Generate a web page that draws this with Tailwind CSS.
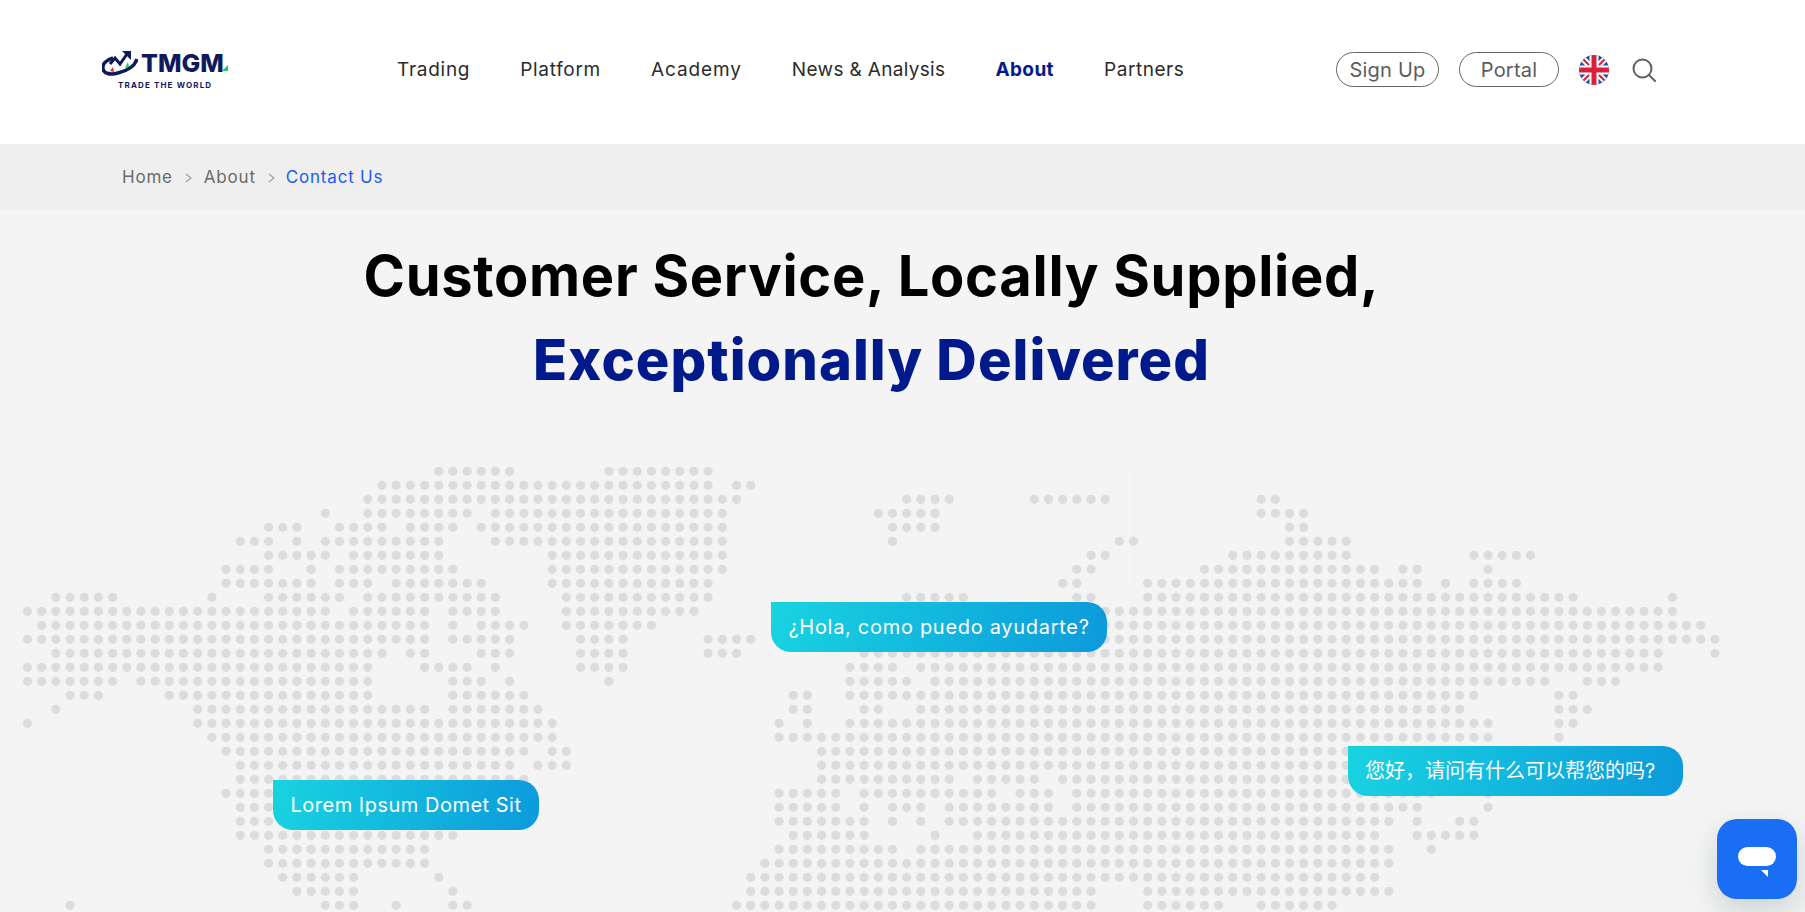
<!DOCTYPE html>
<html>
  <head>
    <meta charset="UTF-8" />
    <meta name="viewport" content="width=device-width, initial-scale=1.0" />
    <script src="https://cdn.jsdelivr.net/npm/@tailwindcss/browser@4"></script>
  </head>

  <body class="font-['Inter','Noto_Sans_CJK_SC',sans-serif] bg-[#f4f4f4]">
    <div class="relative h-[912px] overflow-hidden">
      <!-- header -->
      <header class="h-[144px] bg-white flex items-center">
        <div class="ml-[101px] w-[127px] h-[44px] relative shrink-0">
          <svg class="absolute left-px top-0" width="36" height="26" viewBox="0 0 36 26" fill="none">
            <path d="M11 8C4 10 0 14 1 19c1 5 8 6 15 4 9-2 17-7 19-14" stroke="#0f1a5c" stroke-width="3.6" fill="none"/>
            <path d="M8 14l5-6 5 6 7-10" stroke="#0f1a5c" stroke-width="3" fill="none"/>
            <path d="M20 1h9v9z" fill="#0f1a5c"/>
            <path d="M8 21l3-4 1 5z" fill="#e5343c"/>
            <path d="M23 18l3-6 1 5z" fill="#22c55e"/>
          </svg>
          <span class="absolute left-[40px] top-[-2px] text-[25px] leading-[30px] font-extrabold text-[#0f1a5c] font-['Inter']">TMGM</span>
          <svg class="absolute left-[121px] top-[15px]" width="6" height="6" viewBox="0 0 6 6"><path d="M6 0v6H0z" fill="#22c55e"/></svg>
          <span class="absolute left-[17px] top-[29px] text-[8px] leading-[12px] font-bold tracking-[1.15px] text-[#0f1a5c] whitespace-nowrap">TRADE THE WORLD</span>
        </div>

        <nav class="ml-[169px] mb-[3px] flex items-center gap-[50px] text-[19px] text-[#2b2b2b]">
          <a class="tracking-[0.73px]">Trading</a>
          <a class="tracking-[0.7px]">Platform</a>
          <a class="tracking-[0.9px]">Academy</a>
          <a class="tracking-[0.33px]">News &amp; Analysis</a>
          <a class="font-bold tracking-[0.4px] text-[#001a8c]">About</a>
          <a class="tracking-[0.55px]">Partners</a>
        </nav>

        <div class="ml-auto mr-[149px] mb-[5px] flex items-center">
          <a class="w-[103px] h-[35px] rounded-full border border-[#666] flex items-center justify-center text-[20px] tracking-[0.2px] text-[#5c5c5c]">Sign Up</a>
          <a class="ml-[20px] w-[100px] h-[35px] rounded-full border border-[#666] flex items-center justify-center text-[20px] tracking-[0.2px] text-[#5c5c5c]">Portal</a>
          <svg class="ml-[20px]" width="30" height="30" viewBox="0 0 30 30">
            <defs><clipPath id="flagClip"><circle cx="15" cy="15" r="15"/></clipPath></defs>
            <g clip-path="url(#flagClip)">
              <rect width="30" height="30" fill="#1f4fa8"/>
              <path d="M0 0L30 30M30 0L0 30" stroke="#fff" stroke-width="6"/>
              <path d="M0 0L30 30M30 0L0 30" stroke="#d8203a" stroke-width="2"/>
              <path d="M15 0V30M0 15H30" stroke="#fff" stroke-width="9"/>
              <path d="M15 0V30M0 15H30" stroke="#d8203a" stroke-width="5"/>
            </g>
          </svg>
          <svg class="ml-[23px]" width="24" height="24" viewBox="0 0 24 24" fill="none" stroke="#5f5f5f" stroke-width="2">
            <circle cx="10.5" cy="10.5" r="9"/>
            <path d="M17 17l6 6" stroke-linecap="round"/>
          </svg>
        </div>
      </header>

      <!-- breadcrumb -->
      <div class="h-[66px] bg-[#efefef] pl-[122px] pt-[2px] flex items-center text-[17px] text-[#6b6b6b]">
        <a class="tracking-[0.8px]">Home</a>
        <svg class="mx-[12px]" width="7" height="10" viewBox="0 0 7 10" fill="none" stroke="#a0a0a0" stroke-width="1.2"><path d="M1 1l5 4-5 4"/></svg>
        <a class="tracking-[0.8px]">About</a>
        <svg class="ml-[12px] mr-[11px]" width="7" height="10" viewBox="0 0 7 10" fill="none" stroke="#a0a0a0" stroke-width="1.2"><path d="M1 1l5 4-5 4"/></svg>
        <a class="tracking-[0.8px] text-[#1d5cf0]">Contact Us</a>
      </div>

      <!-- headline -->
      <div class="relative z-10 w-[1743px] pt-[24px] text-center text-[56px] leading-[84px]">
        <h1 class="font-bold text-black tracking-[0.7px]">Customer Service, Locally Supplied,</h1>
        <h2 class="font-extrabold text-[#001a8c] tracking-[1.05px]">Exceptionally Delivered</h2>
      </div>

      <!-- faint frame behind the map, then the dotted world map -->
      <div class="absolute left-[600px] top-[469px] w-[535px] h-[119px] border border-[#f0f0f0]"></div>
      <svg id="worldMap" class="absolute left-0 top-0" width="1805" height="912"></svg>

      <!-- greeting bubbles -->
      <div class="absolute left-[273px] top-[780px] w-[266px] h-[50px] rounded-[20px] rounded-tl-none bg-linear-[100deg] from-[#19d3e0] to-[#0c9adb] flex items-center justify-center text-white text-[20px] tracking-[0.5px]">Lorem Ipsum Domet Sit</div>
      <div class="absolute left-[771px] top-[602px] w-[336px] h-[50px] rounded-[20px] rounded-tl-none bg-linear-[100deg] from-[#19d3e0] to-[#0c9adb] flex items-center justify-center text-white text-[20px] tracking-[0.7px]">¿Hola, como puedo ayudarte?</div>
      <div class="absolute left-[1348px] top-[746px] w-[335px] h-[50px] pl-[17px] rounded-[20px] rounded-tl-none bg-linear-[100deg] from-[#19d3e0] to-[#0c9adb] flex items-center text-white text-[20px]">您好，请问有什么可以帮您的吗?</div>

      <!-- chat launcher -->
      <div class="absolute left-[1717px] top-[819px] w-[80px] h-[80px] rounded-[20px] bg-[#1a6ef5] shadow-[0_12px_30px_rgba(60,90,90,0.22)]">
        <div class="absolute left-[21px] top-[28px] w-[38px] h-[19px] rounded-full bg-white"></div>
        <svg class="absolute left-[44px] top-[51px]" width="7" height="7" viewBox="0 0 7 7"><path d="M0 0h7v7z" fill="#fff"/></svg>
      </div>
    </div>

    <script>
      // each row: [from, to] column ranges of the dots
      const rows = [
        [[29,34],[41,48]],
        [[25,48],[50,51]],
        [[24,50],[62,65],[71,76],[87,88]],
        [[21,21],[24,31],[33,49],[60,64],[87,90]],
        [[17,19],[22,25],[27,30],[32,49],[61,64],[89,90]],
        [[15,17],[19,19],[21,29],[33,49],[61,61],[77,78],[89,93]],
        [[17,21],[23,29],[37,49],[75,76],[85,93],[102,106]],
        [[14,17],[20,20],[22,30],[37,49],[74,75],[83,95],[97,98],[103,103]],
        [[14,20],[22,24],[26,32],[37,48],[73,74],[79,98],[100,100],[102,105]],
        [[2,6],[13,13],[17,22],[24,33],[38,48],[62,66],[74,75],[79,109],[116,116]],
        [[0,21],[23,28],[30,33],[38,47],[76,116]],
        [[1,28],[30,30],[32,35],[38,44],[76,118]],
        [[0,28],[30,34],[39,42],[48,51],[76,119]],
        [[2,25],[27,28],[32,34],[39,42],[48,50],[59,115],[119,119]],
        [[0,24],[28,31],[33,33],[39,42],[58,61],[63,115]],
        [[0,6],[8,24],[30,32],[34,34],[41,41],[58,62],[64,107],[110,112]],
        [[3,5],[10,24],[30,35],[54,55],[58,102],[108,109]],
        [[2,2],[12,28],[30,36],[54,55],[59,60],[63,101],[108,110]],
        [[0,0],[12,37],[53,53],[55,55],[58,103],[108,109]],
        [[13,37],[53,103],[108,108]],
        [[14,35],[37,38],[56,103]],
        [[15,34],[36,38],[56,103]],
        [[15,35],[56,65],[67,71],[73,103]],
        [[14,35],[53,57],[59,68],[70,72],[74,99],[103,103]],
        [[15,30],[53,57],[59,59],[61,63],[65,72],[74,98],[103,103]],
        [[15,30],[53,59],[61,61],[63,63],[65,96],[98,98],[101,102]],
        [[15,30],[54,59],[64,64],[67,95],[98,102]],
        [[17,28],[53,61],[63,96],[99,99]],
        [[17,28],[52,96]],
        [[18,23],[29,29],[51,95]],
        [[19,23],[30,30],[51,75],[79,96]],
        [[3,3],[21,23],[26,26],[30,31],[50,75],[79,84],[87,92]],
      ];
      let dots = '';
      rows.forEach((ranges, r) => {
        ranges.forEach(([from, to]) => {
          for (let c = from; c <= to; c++) {
            dots += `<circle cx="${27.5 + c * 14.18}" cy="${471.3 + r * 14}" r="4.6" fill="#dcdcdc"/>`;
          }
        });
      });
      document.querySelector('#worldMap').innerHTML = dots;
    </script>
  </body>
</html>
